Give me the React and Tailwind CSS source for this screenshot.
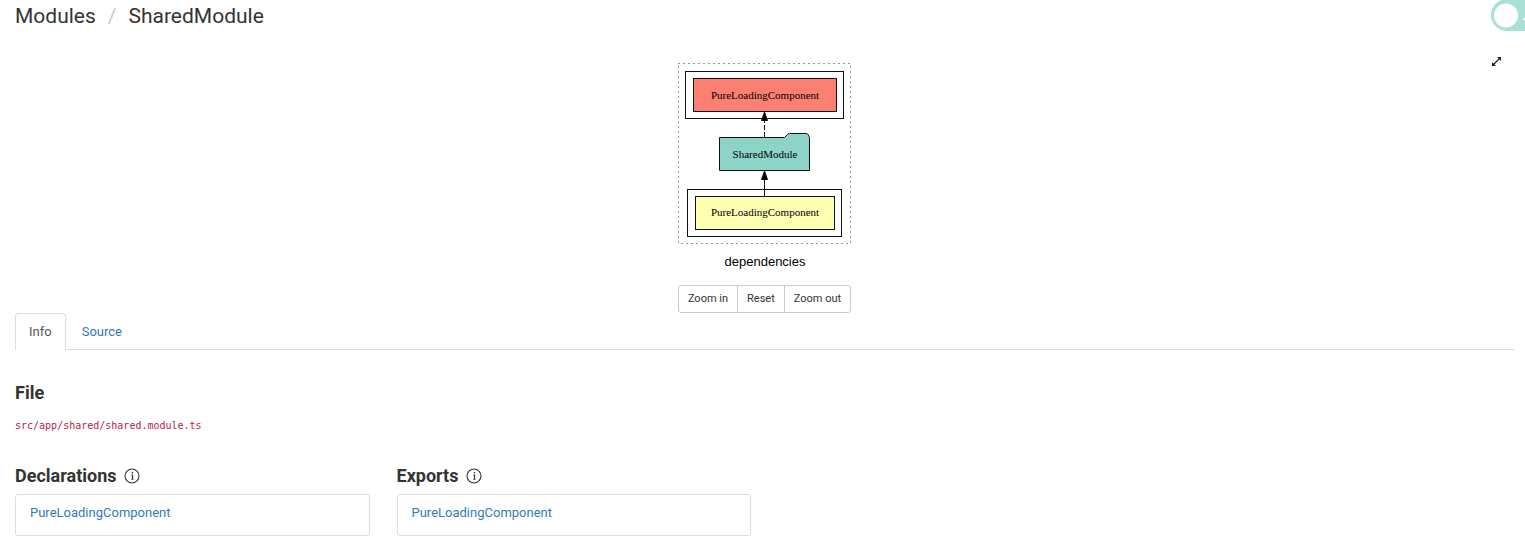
import React from 'react';

function ExpandIcon() {
  return (
    <svg width="11" height="11" viewBox="0 0 11 11" fill="none" stroke="#222" strokeWidth="1.2" aria-hidden="true">
      <path d="M2 9 9 2" />
      <path d="M6 1H10V5L8.600 3.600 7.400 2.400ZM1 6V10H5L3.600 8.600 2.400 7.400Z" fill="#222" stroke="none" />
    </svg>
  );
}

function InfoIcon() {
  return (
    <svg width="16" height="16" viewBox="0 0 16 16" fill="none" stroke="#333" strokeWidth="1.1" aria-hidden="true">
      <circle cx="8" cy="8" r="7" />
      <path d="M8.500 6.500V11.500" strokeWidth="1.3" />
      <path d="M7.200 6.800H8.500M7.200 11.500H9.800" strokeWidth="0.5" />
      <circle cx="8.400" cy="4.600" r="0.800" fill="#333" stroke="none" />
    </svg>
  );
}

function ThemeToggle() {
  return (
    <label className="absolute top-0 -right-6 block h-[31px] w-[58px] cursor-pointer overflow-hidden">
      <input type="checkbox" aria-label="Dark mode" className="peer sr-only" />
      <svg width="58" height="31" viewBox="0 0 58 31" aria-hidden="true">
        <rect y="-1" width="58" height="32" rx="16" fill="#abe0d6" />
        <circle cx="15" cy="15.5" r="12" fill="#fff" />
        <path d="M31.5 19 34 17.5V21Z" fill="#fff" />
      </svg>
    </label>
  );
}

function DependencyGraph() {
  return (
    <svg width="175" height="210" viewBox="0 0 175 210" role="img" aria-label="dependencies" stroke="#111" strokeWidth="1">
      <rect x="1.5" y="3.5" width="172" height="180" fill="none" stroke="#333" strokeDasharray="1 4" />
      <g fill="none">
        <rect x="8.5" y="11.5" width="158" height="47" />
        <rect x="10.5" y="129.5" width="154" height="47" />
      </g>
      <rect x="16.5" y="18.5" width="143" height="33" fill="#fb8072" />
      <path d="M42.5 77.5H107.5L110.5 74.5Q111 73.5 112.5 73.5H129Q130.5 73.5 131 74.5L132.5 77.5V110.5H42.5Z" fill="#8dd3c7" />
      <rect x="18.5" y="136.5" width="139" height="33" fill="#ffffb3" />
      <path d="M87.5 77V61" strokeDasharray="5 2" />
      <path d="M87.5 136V120" />
      <g fill="#000">
        <path d="M84.5 60.5 87.5 52 90.5 60.5Z" />
        <path d="M84.5 119.5 87.5 111 90.5 119.5Z" />
      </g>
      <g fill="#000" stroke="none" textAnchor="middle" className="font-['Liberation_Serif',serif] text-[11px]">
        <text x="88" y="39">PureLoadingComponent</text>
        <text x="88" y="98">SharedModule</text>
        <text x="88" y="156">PureLoadingComponent</text>
        <text x="88" y="206" className="font-['Liberation_Sans',sans-serif] text-[13px]">dependencies</text>
      </g>
    </svg>
  );
}

function LinkCard({ title }) {
  return (
    <section>
      <h3 className="flex items-center gap-2 text-[18px] leading-5 font-bold">
        {title}
        <InfoIcon />
      </h3>
      <div className="mt-2 h-[42px] rounded-[3px] border border-[#ddd] px-3.5 pt-2 leading-5">
        <a href="#component" className="text-[#337ab7]">PureLoadingComponent</a>
      </div>
    </section>
  );
}

export default function App() {
  return (
    <div className="relative overflow-hidden bg-white pr-[11px] pb-[9px] pl-[15px] font-[Roboto,sans-serif] text-[13px] text-[#333]">
      <ThemeToggle />
      <nav aria-label="Breadcrumb" className="flex h-8 gap-3 text-[21px] leading-8">
        <span>Modules</span>
        <span className="text-[#ccc]">/</span>
        <span>SharedModule</span>
      </nav>
      <div className="grid grid-cols-[1fr_auto_1fr] pt-7">
        <span />
        <DependencyGraph />
        <button type="button" aria-label="Full screen" className="-mt-[5px] mr-3 h-3 self-start justify-self-end">
          <ExpandIcon />
        </button>
      </div>
      <div className="mt-[15px] flex justify-center">
        <div className="flex h-7 divide-x divide-[#ccc] rounded-[3px] border border-[#ccc] text-[11px] leading-[26px]">
          <button type="button" className="px-[9px]">Zoom in</button>
          <button type="button" className="px-[9px]">Reset</button>
          <button type="button" className="px-[9px]">Zoom out</button>
        </div>
      </div>
      <div className="flex h-[37px] gap-0.5 border-b border-[#ddd] leading-[37px]">
        <a href="#info" className="h-[37px] rounded-t border border-b-0 border-[#ddd] bg-white px-[13px] leading-[35px] text-[#555]">Info</a>
        <a href="#source" className="px-3.5 text-[#337ab7]">Source</a>
      </div>
      <h3 className="mt-[33px] text-[18px] leading-5 font-bold">File</h3>
      <p className="mt-[13px] text-[10px] leading-5 text-[#b4234b]">
        <code className="font-['DejaVu_Sans_Mono',monospace]">src/app/shared/shared.module.ts</code>
      </p>
      <div className="mt-[30px] grid grid-cols-4 gap-[27px]">
        <LinkCard title="Declarations" />
        <LinkCard title="Exports" />
      </div>
    </div>
  );
}
